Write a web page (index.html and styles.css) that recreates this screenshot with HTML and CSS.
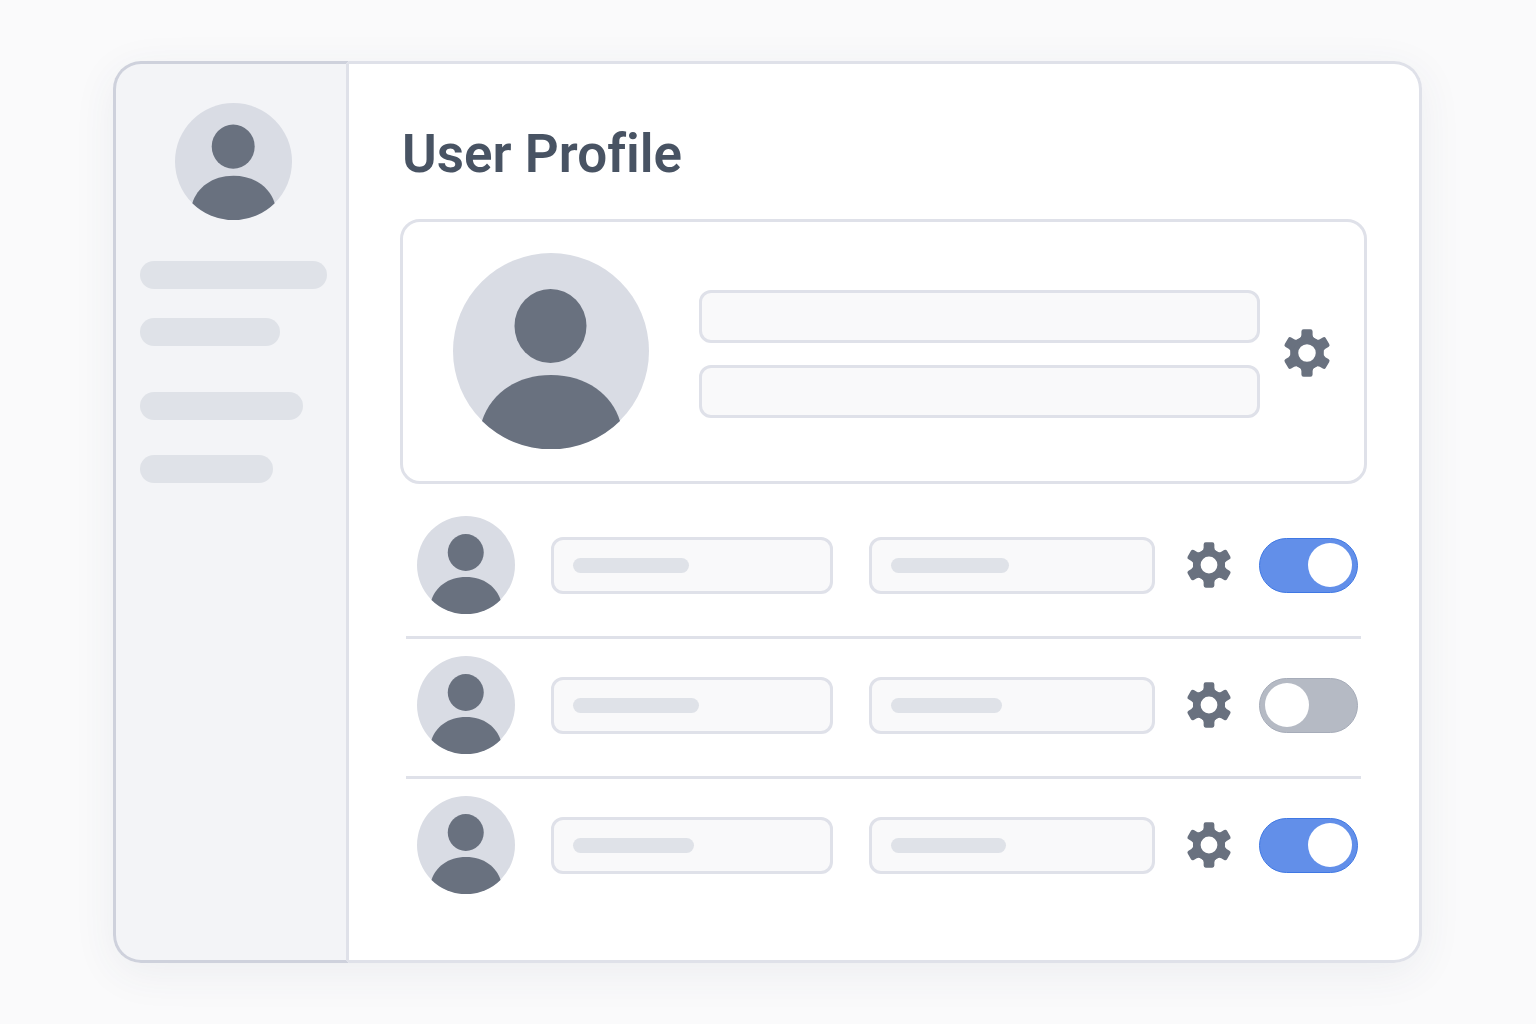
FILE: index.html
```html
<!DOCTYPE html>
<html lang="en">
<head>
<meta charset="utf-8">
<meta name="viewport" content="width=device-width, initial-scale=1">
<title>User Profile</title>
<link rel="stylesheet" href="styles.css">
</head>
<body>
<svg class="sprite" aria-hidden="true">
  <symbol id="avatar" viewBox="0 0 196 196">
    <circle class="avatar-disc" cx="98" cy="98" r="98"/>
    <ellipse class="avatar-person" cx="97.5" cy="73" rx="36" ry="37"/>
    <path class="avatar-person" d="M29 168C37 142 62 122 98 122S159 142 167 168A98 98 0 0 1 29 168Z"/>
  </symbol>
  <symbol id="gear" viewBox="-24 -24 48 48">
    <defs>
      <path id="tooth" d="M-8 -14Q-5.6 -15.6 -5.6 -18V-21.5Q-5.6 -23.7 -3.4 -23.7H3.4Q5.6 -23.7 5.6 -21.5V-18Q5.6 -15.6 8 -14Z"/>
    </defs>
    <circle class="gear-ring" r="12.75"/>
    <g class="gear-teeth">
      <use href="#tooth"/>
      <use href="#tooth" transform="rotate(60)"/>
      <use href="#tooth" transform="rotate(120)"/>
      <use href="#tooth" transform="rotate(180)"/>
      <use href="#tooth" transform="rotate(240)"/>
      <use href="#tooth" transform="rotate(300)"/>
    </g>
  </symbol>
</svg>

<div class="window">
  <aside class="sidebar">
    <svg class="avatar avatar-medium" role="img" aria-label="Your avatar"><use href="#avatar"/></svg>
    <nav class="nav" aria-label="Main">
      <div class="nav-group">
        <a class="nav-link" href="#" aria-label="Menu item 1" style="width:100%"></a>
        <a class="nav-link" href="#" aria-label="Menu item 2" style="width:75%"></a>
      </div>
      <div class="nav-group nav-group-loose">
        <a class="nav-link" href="#" aria-label="Menu item 3" style="width:87%"></a>
        <a class="nav-link" href="#" aria-label="Menu item 4" style="width:71%"></a>
      </div>
    </nav>
  </aside>

  <main class="main">
    <h1 class="title">User Profile</h1>

    <section class="card" aria-label="Profile">
      <svg class="avatar avatar-large" role="img" aria-label="Profile picture"><use href="#avatar"/></svg>
      <div class="card-fields">
        <input class="input" type="text" aria-label="Name">
        <input class="input" type="text" aria-label="Email">
      </div>
      <button class="gear-button gear-button-large" type="button" aria-label="Profile settings"><svg class="gear"><use href="#gear"/></svg></button>
    </section>

    <ul class="rows">
      <li class="row">
        <svg class="avatar avatar-small" role="img" aria-label="User 1"><use href="#avatar"/></svg>
        <div class="row-fields">
          <div class="field"><input class="input input-tall" type="text" aria-label="User 1 name"><span class="bar" style="width:116px"></span></div>
          <div class="field"><input class="input input-tall" type="text" aria-label="User 1 role"><span class="bar" style="width:118px"></span></div>
        </div>
        <div class="actions">
          <button class="gear-button" type="button" aria-label="User 1 settings"><svg class="gear"><use href="#gear"/></svg></button>
          <input class="toggle" type="checkbox" role="switch" aria-label="User 1 enabled" checked>
        </div>
      </li>
      <li class="row">
        <svg class="avatar avatar-small" role="img" aria-label="User 2"><use href="#avatar"/></svg>
        <div class="row-fields">
          <div class="field"><input class="input input-tall" type="text" aria-label="User 2 name"><span class="bar" style="width:126px"></span></div>
          <div class="field"><input class="input input-tall" type="text" aria-label="User 2 role"><span class="bar" style="width:111px"></span></div>
        </div>
        <div class="actions">
          <button class="gear-button" type="button" aria-label="User 2 settings"><svg class="gear"><use href="#gear"/></svg></button>
          <input class="toggle" type="checkbox" role="switch" aria-label="User 2 enabled">
        </div>
      </li>
      <li class="row">
        <svg class="avatar avatar-small" role="img" aria-label="User 3"><use href="#avatar"/></svg>
        <div class="row-fields">
          <div class="field"><input class="input input-tall" type="text" aria-label="User 3 name"><span class="bar" style="width:121px"></span></div>
          <div class="field"><input class="input input-tall" type="text" aria-label="User 3 role"><span class="bar" style="width:115px"></span></div>
        </div>
        <div class="actions">
          <button class="gear-button" type="button" aria-label="User 3 settings"><svg class="gear"><use href="#gear"/></svg></button>
          <input class="toggle" type="checkbox" role="switch" aria-label="User 3 enabled" checked>
        </div>
      </li>
    </ul>
  </main>
</div>
</body>
</html>
```
FILE: styles.css
```css
:root {
  --page: #fafafb;
  --line: #dfe1e9;
  --line-strong: #ced1dc;
  --bar: #dfe2e8;
  --disc: #d9dce4;
  --ink: #69717f;
  --title: #485363;
  --blue: #628fe9;
  --blue-edge: #3f78e4;
  --gray: #b5bac4;
  --gray-edge: #a6acb9;
}

* {
  box-sizing: border-box;
}

body {
  margin: 0;
  padding: 61px 114px 61px 113px;
  background: var(--page);
  font-family: Roboto, "Liberation Sans", sans-serif;
}

.sprite {
  position: absolute;
  width: 0;
  height: 0;
}

.window {
  display: flex;
  border-radius: 28px;
  background: #fff;
  box-shadow: 0 10px 44px rgba(60, 70, 100, 0.07);
}

/* Sidebar */

.sidebar {
  flex: none;
  width: 236px;
  padding: 39px 19px 38px 24px;
  border: 3px solid var(--line-strong);
  border-right-color: var(--line);
  border-radius: 28px 0 0 28px;
  background: #f3f4f7;
}

.avatar {
  display: block;
  flex: none;
}

.avatar-disc {
  fill: var(--disc);
}

.avatar-person {
  fill: var(--ink);
}

.avatar-medium {
  width: 117px;
  height: 117px;
  margin: 0 auto;
}

.avatar-large {
  width: 196px;
  height: 196px;
}

.avatar-small {
  width: 98px;
  height: 98px;
}

.nav {
  display: flex;
  flex-direction: column;
  gap: 46px;
  margin-top: 41px;
}

.nav-group {
  display: flex;
  flex-direction: column;
  gap: 29px;
}

.nav-group-loose {
  gap: 35px;
}

.nav-link {
  display: block;
  height: 28px;
  border-radius: 14px;
  background: var(--bar);
}

/* Main panel */

.main {
  flex: 1;
  min-width: 0;
  padding: 58px 52px 44px 51px;
  border: 3px solid var(--line);
  border-left: 0;
  border-radius: 0 28px 28px 0;
}

.title {
  margin: 0 0 33px;
  padding-left: 2px;
  color: var(--title);
  font-size: 53px;
  font-weight: 600;
  font-variant-ligatures: none;
  line-height: 64px;
}

.card {
  display: flex;
  align-items: center;
  gap: 50px;
  padding: 31px 33px 32px 50px;
  border: 3px solid var(--line);
  border-radius: 20px;
}

.card-fields {
  display: flex;
  flex: 1;
  flex-direction: column;
  gap: 22px;
  padding-top: 6px;
}

.input {
  display: block;
  width: 100%;
  height: 53px;
  padding: 0 20px;
  border: 3px solid var(--line);
  border-radius: 12px;
  background: #f9f9fa;
  color: var(--title);
  font: inherit;
  font-size: 20px;
}

.input-tall {
  height: 57px;
}

.gear-button {
  display: block;
  flex: none;
  width: 46px;
  height: 46px;
  padding: 0;
  border: 0;
  background: none;
  cursor: pointer;
}

.gear-button-large {
  width: 48px;
  height: 48px;
  margin: 3px 0 0 -27px;
}

.gear {
  display: block;
  width: 100%;
  height: 100%;
}

.gear-ring {
  fill: none;
  stroke: var(--ink);
  stroke-width: 8px;
}

.gear-teeth {
  fill: var(--ink);
}

.rows {
  margin: 15px 6px 0;
  padding: 0;
  list-style: none;
}

.row {
  display: flex;
  align-items: center;
  gap: 31px;
  padding: 17px 3px 22px 11px;
}

.row:not(:last-child) {
  border-bottom: 3px solid var(--line);
}

.row-fields {
  display: grid;
  flex: 1;
  grid-template-columns: 71fr 72fr;
  gap: 36px;
  margin-left: 5px;
}

.field {
  display: grid;
  align-items: center;
}

.field > * {
  grid-area: 1 / 1;
}

.bar {
  height: 15px;
  margin-left: 22px;
  border-radius: 8px;
  background: var(--bar);
  pointer-events: none;
}

.actions {
  display: flex;
  align-items: center;
  gap: 27px;
}

.toggle {
  display: flex;
  align-items: center;
  width: 99px;
  height: 55px;
  margin: 0;
  padding: 0 5px;
  border: 1px solid var(--gray-edge);
  border-radius: 28px;
  background: var(--gray);
  appearance: none;
  cursor: pointer;
}

.toggle::before {
  width: 44px;
  height: 44px;
  border-radius: 50%;
  background: #fff;
  content: "";
}

.toggle:checked {
  justify-content: flex-end;
  border-color: var(--blue-edge);
  background: var(--blue);
}
```
